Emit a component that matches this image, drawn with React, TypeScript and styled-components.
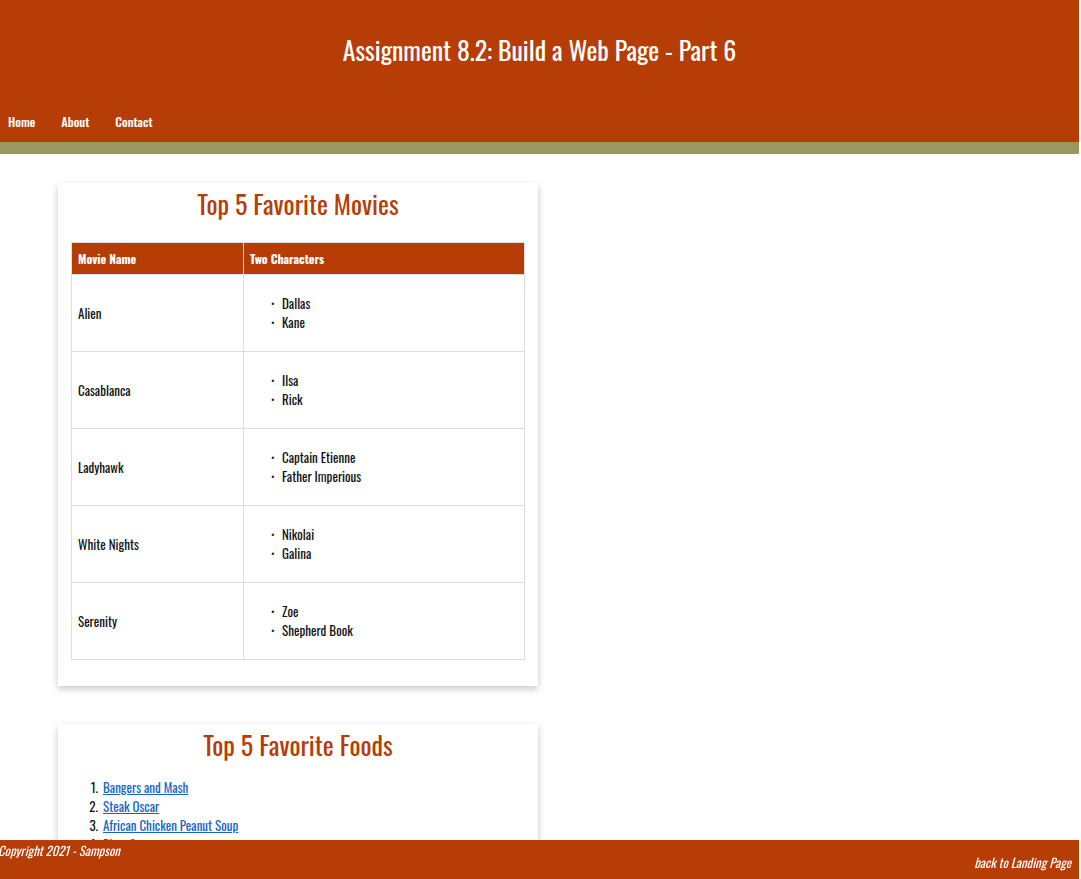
import React from "react";
import styled, { createGlobalStyle } from "styled-components";

const ORANGE = "#b73d07";
const GREEN = "#9a9862";
const FONT = `"Oswald", "Liberation Sans Narrow", "DejaVu Sans Condensed", "Roboto Condensed", "Liberation Sans", sans-serif`;

const Global = createGlobalStyle`
  html, body { margin: 0; padding: 0; background: #fff; }
  body { font-family: ${FONT}; color: #111; width: 1079px; overflow-x: hidden; }
  * { box-sizing: border-box; }
`;

const Header = styled.header`
  background: ${ORANGE};
  height: 142px;
  display: flex;
  flex-direction: column;
  padding: 29px 0 11px;
`;

const Title = styled.h1`
  margin: 0;
  font-weight: 400;
  font-size: 25.8px;
  line-height: 40px;
  color: #fff;
  text-align: center;
`;

const Nav = styled.nav`
  margin-top: auto;
  display: flex;
  gap: 26px;
  padding-left: 8px;
  height: 20px;
  align-items: center;
`;

const NavLink = styled.a`
  color: #fff;
  font-size: 12.4px;
  font-weight: 500;
  text-decoration: none;
`;

const Stripe = styled.div`
  height: 12px;
  background: ${GREEN};
`;

const Main = styled.main`
  padding: 29px 0 80px 58px;
  display: flex;
  flex-direction: column;
  gap: 38px;
`;

const Card = styled.section`
  width: 480px;
  background: #fff;
  box-shadow: 0 3px 7px rgba(0, 0, 0, 0.22);
  padding: 6px 13px 26px;
`;

const CardTitle = styled.h2`
  margin: 0;
  font-weight: 400;
  font-size: 26px;
  line-height: 30px;
  color: ${ORANGE};
  text-align: center;
`;

const Table = styled.table`
  margin-top: 23px;
  width: 100%;
  border-collapse: collapse;
  font-size: 13px;
`;

const Th = styled.th<{ $w?: string }>`
  background: ${ORANGE};
  color: #fff;
  text-align: left;
  font-weight: 700;
  font-size: 12px;
  height: 32px;
  padding: 0 6px;
  border: 1px solid #ddd;
  width: ${(p) => p.$w || "auto"};
`;

const Td = styled.td`
  border: 1px solid #ddd;
  padding: 8px 6px;
  vertical-align: middle;
`;

const Chars = styled.ul`
  margin: 11px 0;
  padding-left: 32px;
  list-style: none;
  li {
    line-height: 19px;
    position: relative;
  }
  li::before {
    content: "•";
    position: absolute;
    left: -11px;
    font-size: 10px;
  }
`;

const Foods = styled.ol`
  margin: 18px 0 0;
  padding-left: 30px;
  font-size: 13px;
  li { line-height: 19px; padding-left: 2px; }
  a { color: #1565c8; }
`;

const Footer = styled.footer`
  position: fixed;
  left: 0;
  bottom: 0;
  width: 1079px;
  height: 39px;
  background: ${ORANGE};
  display: flex;
  justify-content: space-between;
  color: #fff;
  font-style: italic;
  font-size: 12.7px;
`;

const FootLeft = styled.span`
  margin-left: -2px;
  margin-top: 2px;
  line-height: 18px;
`;

const FootRight = styled.a`
  color: #fff;
  text-decoration: none;
  margin-right: 8px;
  margin-top: 14px;
  line-height: 18px;
`;

const movies: [string, string[]][] = [
  ["Alien", ["Dallas", "Kane"]],
  ["Casablanca", ["Ilsa", "Rick"]],
  ["Ladyhawk", ["Captain Etienne", "Father Imperious"]],
  ["White Nights", ["Nikolai", "Galina"]],
  ["Serenity", ["Zoe", "Shepherd Book"]],
];

const foods = [
  "Bangers and Mash",
  "Steak Oscar",
  "African Chicken Peanut Soup",
  "Pizza Supreme",
  "Shepherd's Pie",
];

export default function App() {
  return (
    <>
      <Global />
      <Header>
        <Title>Assignment 8.2: Build a Web Page - Part 6</Title>
        <Nav>
          <NavLink href="#">Home</NavLink>
          <NavLink href="#">About</NavLink>
          <NavLink href="#">Contact</NavLink>
        </Nav>
      </Header>
      <Stripe />
      <Main>
        <Card>
          <CardTitle>Top 5 Favorite Movies</CardTitle>
          <Table>
            <thead>
              <tr>
                <Th $w="172px">Movie Name</Th>
                <Th>Two Characters</Th>
              </tr>
            </thead>
            <tbody>
              {movies.map(([name, chars]) => (
                <tr key={name}>
                  <Td>{name}</Td>
                  <Td>
                    <Chars>
                      {chars.map((c) => (
                        <li key={c}>{c}</li>
                      ))}
                    </Chars>
                  </Td>
                </tr>
              ))}
            </tbody>
          </Table>
        </Card>
        <Card>
          <CardTitle>Top 5 Favorite Foods</CardTitle>
          <Foods>
            {foods.map((f) => (
              <li key={f}>
                <a href="#">{f}</a>
              </li>
            ))}
          </Foods>
        </Card>
      </Main>
      <Footer>
        <FootLeft>Copyright 2021 - Sampson</FootLeft>
        <FootRight href="#">back to Landing Page</FootRight>
      </Footer>
    </>
  );
}
